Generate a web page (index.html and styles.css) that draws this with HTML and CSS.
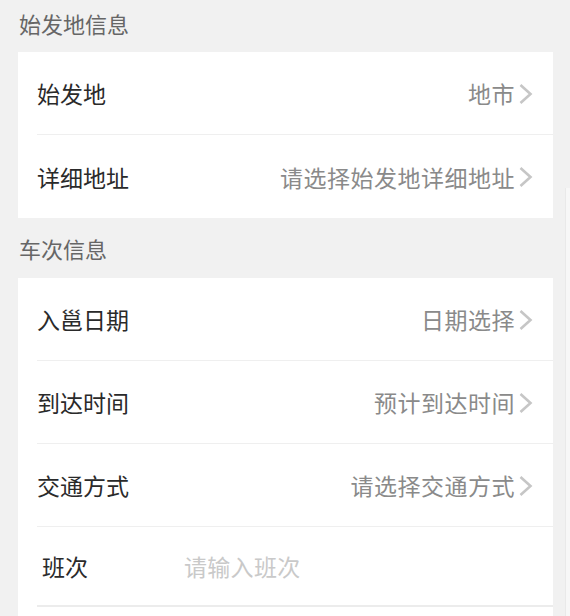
FILE: index.html
```html
<!DOCTYPE html>
<html lang="zh-CN">
<head>
<meta charset="utf-8">
<title>信息填写</title>
<link rel="stylesheet" href="styles.css">
</head>
<body>
<div class="page">
  <div class="section-title first">始发地信息</div>
  <div class="card">
    <div class="row">
      <span class="label">始发地</span>
      <span class="value">地市</span>
      <svg class="chev" viewBox="0 0 15 22" width="15" height="22"><path d="M2.5 2 L12.5 11 L2.5 20" fill="none" stroke="#c6c6c6" stroke-width="2.6"/></svg>
    </div>
    <div class="row">
      <span class="label">详细地址</span>
      <span class="value">请选择始发地详细地址</span>
      <svg class="chev" viewBox="0 0 15 22" width="15" height="22"><path d="M2.5 2 L12.5 11 L2.5 20" fill="none" stroke="#c6c6c6" stroke-width="2.6"/></svg>
    </div>
  </div>

  <div class="section-title">车次信息</div>
  <div class="card">
    <div class="row">
      <span class="label">入邕日期</span>
      <span class="value">日期选择</span>
      <svg class="chev" viewBox="0 0 15 22" width="15" height="22"><path d="M2.5 2 L12.5 11 L2.5 20" fill="none" stroke="#c6c6c6" stroke-width="2.6"/></svg>
    </div>
    <div class="row">
      <span class="label">到达时间</span>
      <span class="value">预计到达时间</span>
      <svg class="chev" viewBox="0 0 15 22" width="15" height="22"><path d="M2.5 2 L12.5 11 L2.5 20" fill="none" stroke="#c6c6c6" stroke-width="2.6"/></svg>
    </div>
    <div class="row">
      <span class="label">交通方式</span>
      <span class="value">请选择交通方式</span>
      <svg class="chev" viewBox="0 0 15 22" width="15" height="22"><path d="M2.5 2 L12.5 11 L2.5 20" fill="none" stroke="#c6c6c6" stroke-width="2.6"/></svg>
    </div>
    <div class="row input-row">
      <span class="label short">班次</span>
      <span class="placeholder">请输入班次</span>
    </div>
    <div class="row-tail"></div>
  </div>
</div>
<div class="scroll-strip"></div>
</body>
</html>
```

FILE: styles.css
```css
html, body {
  margin: 0;
  padding: 0;
  background: #f1f1f1;
  font-family: "Noto Sans CJK SC", "Noto Sans", sans-serif;
  overflow: hidden;
}

.page {
  width: 535px;
  margin-left: 18px;
}

.section-title {
  height: 60px;
  display: flex;
  align-items: center;
  padding-left: 1px;
  font-size: 22px;
  color: #666;
}

.section-title.first {
  height: 52px;
  padding-bottom: 7px;
  box-sizing: border-box;
}

.card {
  background: #fff;
}

.row {
  height: 83px;
  display: flex;
  align-items: center;
  margin-left: 19px;
  padding-right: 20px;
  border-bottom: 1px solid #efefef;
  box-sizing: border-box;
}

.row:last-of-type {
  border-bottom: none;
}

.label {
  font-size: 23px;
  color: #2a2a2a;
}

.value {
  margin-left: auto;
  font-size: 23px;
  letter-spacing: 0.5px;
  color: #8a8a8a;
}

.chev {
  margin-left: 3px;
  margin-top: 1px;
}

.input-row {
  height: 80px;
  border-bottom: 2px solid #ececec !important;
}

.label.short {
  margin-left: 5px;
  width: 142px;
}

.placeholder {
  font-size: 23px;
  letter-spacing: 0.3px;
  color: #c9c9c9;
}

.row-tail {
  height: 12px;
}

.scroll-strip {
  position: absolute;
  top: 188px;
  right: 0;
  width: 4px;
  height: 428px;
  background: #f7f7f7;
  border-left: 1px solid #e9e9e9;
}
```
